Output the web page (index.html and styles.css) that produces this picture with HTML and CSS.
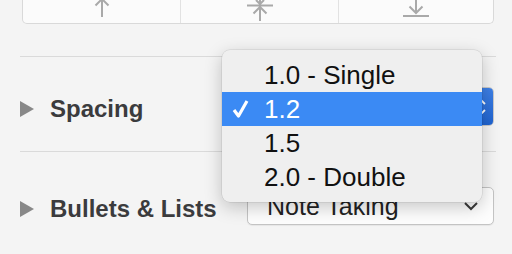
FILE: index.html
```html
<!DOCTYPE html>
<html>
<head>
<meta charset="utf-8">
<link rel="stylesheet" href="styles.css">
</head>
<body>
<div class="panel">
  <div class="align-card">
    <div class="cell">
      <svg width="30" height="24" viewBox="85 0 30 24"><path d="M100 -1 V17 M93.5 5.5 L100 -1 L106.5 5.5" class="ico"/></svg>
    </div>
    <div class="cell">
      <svg width="30" height="24" viewBox="243 0 30 24"><path d="M245 5.5 H271 M258 -3 V4 M254 0 L258 4 L262 0 M258 7 V21 M251.5 13.5 L258 7 L264.5 13.5" class="ico"/></svg>
    </div>
    <div class="cell">
      <svg width="30" height="24" viewBox="401 0 30 24"><path d="M416 -1 V13 M409.5 6.5 L416 13 L422.5 6.5 M403 16 H429" class="ico"/></svg>
    </div>
  </div>

  <div class="sep sep-first"></div>

  <div class="row row-spacing">
    <div class="label">
      <span class="tri"></span>
      <span class="label-text">Spacing</span>
    </div>
    <div class="popup blue">
      <span class="popup-text"></span>
      <span class="stepper">
        <svg width="10" height="20" viewBox="0 0 10 20"><path d="M2 7 L5 4 L8 7 M2 13 L5 16 L8 13" class="chev-w"/></svg>
      </span>
    </div>
  </div>

  <div class="sep"></div>

  <div class="row row-bullets">
    <div class="label">
      <span class="tri"></span>
      <span class="label-text">Bullets &amp; Lists</span>
    </div>
    <div class="popup plain">
      <span class="popup-text">Note Taking</span>
      <svg class="chev" width="16" height="10" viewBox="0 0 16 10"><path d="M2 2 L8 8 L14 2" class="chev-d"/></svg>
    </div>
  </div>

  <div class="menu">
    <div class="item">1.0 - Single</div>
    <div class="item selected">
      <svg class="check" width="18" height="20" viewBox="0 0 18 20"><path d="M2 11 L6.5 17 L15 2" class="chk"/></svg>
      1.2
    </div>
    <div class="item">1.5</div>
    <div class="item">2.0 - Double</div>
  </div>
</div>
</body>
</html>
```

FILE: styles.css
```css
html, body {
  margin: 0;
  padding: 0;
}
body {
  width: 512px;
  height: 254px;
  overflow: hidden;
  background: #f4f4f4;
  font-family: "Liberation Sans", Arial, sans-serif;
}
.panel {
  position: relative;
  width: 512px;
  height: 254px;
}
.align-card {
  margin-left: 22px;
  width: 470px;
  height: 23px;
  background: #fbfbfb;
  border: 1px solid #d9d9d9;
  border-top: none;
  border-radius: 0 0 5px 5px;
  display: grid;
  grid-template-columns: 158px 158px 1fr;
}
.cell {
  display: flex;
  justify-content: center;
  align-items: flex-start;
  border-right: 1px solid #e2e2e2;
  overflow: hidden;
}
.cell:last-child {
  border-right: none;
}
.cell svg {
  display: block;
}
.ico {
  fill: none;
  stroke: #a9a9a9;
  stroke-width: 2;
}
.sep {
  margin-left: 20px;
  width: 476px;
  height: 1px;
  background: #dadada;
}
.sep-first {
  margin-top: 32px;
}
.row {
  display: flex;
  align-items: center;
  justify-content: space-between;
  padding-left: 20px;
  padding-right: 18px;
  box-sizing: border-box;
}
.row-spacing {
  height: 94px;
  padding-top: 5px;
}
.row-bullets {
  height: 101px;
  padding-top: 7px;
}
.label {
  display: flex;
  align-items: center;
  padding-top: 5px;
}
.tri {
  width: 0;
  height: 0;
  border-top: 8.5px solid transparent;
  border-bottom: 8.5px solid transparent;
  border-left: 14px solid #888;
  margin-right: 16px;
}
.label-text {
  font-size: 24px;
  font-weight: bold;
  color: #3b3b3d;
  line-height: 28px;
}
.popup {
  width: 247px;
  box-sizing: border-box;
  border-radius: 5px;
  display: flex;
  align-items: center;
  position: relative;
}
.popup.blue {
  height: 39px;
  background: #fff;
  border: 1px solid #c9c9c9;
  overflow: hidden;
}
.popup.plain {
  height: 38px;
  background: #fdfdfd;
  border: 1px solid #c4c4c4;
  box-shadow: 0 1px 1px rgba(0,0,0,0.06);
}
.popup-text {
  font-size: 25px;
  color: #222;
  padding-left: 19px;
  flex: 1;
}
.stepper {
  width: 22px;
  align-self: stretch;
  background: linear-gradient(#3e80e6, #1f63cf);
  display: flex;
  align-items: center;
  justify-content: center;
}
.chev-w {
  fill: none;
  stroke: #fff;
  stroke-width: 1.8;
}
.chev {
  margin-right: 14px;
}
.chev-d {
  fill: none;
  stroke: #3a3a3a;
  stroke-width: 2;
}
.menu {
  position: absolute;
  left: 222px;
  top: 50px;
  width: 260px;
  height: 152px;
  box-sizing: border-box;
  padding: 8px 0;
  background: #efefef;
  border-radius: 8px;
  box-shadow: 0 0 0 0.5px rgba(0,0,0,0.12), 0 5px 18px rgba(0,0,0,0.22);
}
.item {
  position: relative;
  height: 34px;
  line-height: 34px;
  padding-left: 42px;
  font-size: 26px;
  color: #111;
}
.item.selected {
  background: #3b8af4;
  color: #fff;
}
.check {
  position: absolute;
  left: 10px;
  top: 7px;
}
.chk {
  fill: none;
  stroke: #fff;
  stroke-width: 3.2;
  stroke-linejoin: round;
}
```
